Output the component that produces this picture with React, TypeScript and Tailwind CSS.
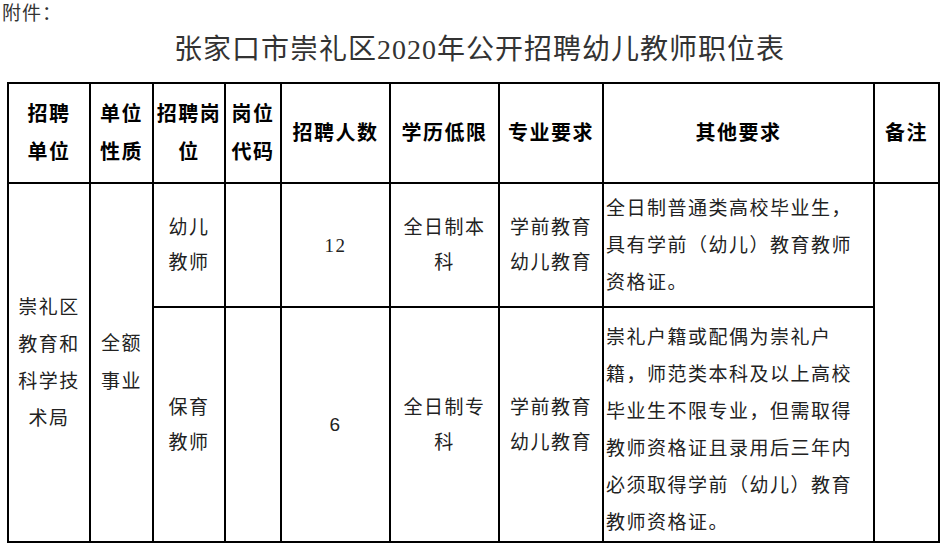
const cjk = "font-['Liberation_Serif','Noto_Sans_CJK_SC',serif]"

function Cell({ children, className = "" }: { children?: React.ReactNode; className?: string }) {
  return (
    <div className={"bg-white flex items-center justify-center text-center " + className}>
      {children}
    </div>
  )
}

function Head({ children, className = "" }: { children: React.ReactNode; className?: string }) {
  return (
    <Cell className={"font-bold text-[20px] leading-[38px] tracking-[1.5px] text-black " + className}>
      <div>{children}</div>
    </Cell>
  )
}

function Body({ children, className = "" }: { children?: React.ReactNode; className?: string }) {
  return (
    <Cell className={"text-[19px] leading-[35px] tracking-[1.5px] text-[#222] " + className}>
      <div>{children}</div>
    </Cell>
  )
}

export default function App() {
  return (
    <div className={"w-[940px] h-[544px] bg-white overflow-hidden " + cjk}>
      <div className="h-[28px] pl-[2px] text-[19px] leading-[28px] tracking-[1px] text-[#333]">附件：</div>
      <div className="h-[44px] pl-[19px] text-center text-[28px] leading-[44px] tracking-[1px] text-[#333]">
        张家口市崇礼区2020年公开招聘幼儿教师职位表
      </div>
      <div className="mt-[10px] ml-[7px] w-[933px] bg-black p-[2px] grid gap-[2px] grid-cols-[80px_61px_70px_54px_107px_107px_102px_269px_63px] grid-rows-[98px_122px_233px]">
        <Head>招聘<br />单位</Head>
        <Head>单位<br />性质</Head>
        <Head>招聘岗<br />位</Head>
        <Head>岗位<br />代码</Head>
        <Head>招聘人数</Head>
        <Head>学历低限</Head>
        <Head>专业要求</Head>
        <Head>其他要求</Head>
        <Head>备注</Head>

        <Body className="row-span-2 leading-[37px]">崇礼区<br />教育和<br />科学技<br />术局</Body>
        <Body className="row-span-2 leading-[38px]">全额<br />事业</Body>
        <Body>幼儿<br />教师</Body>
        <Body />
        <Body>12</Body>
        <Body>全日制本<br />科</Body>
        <Body>学前教育<br />幼儿教育</Body>
        <Cell className="justify-start text-left text-[19px] leading-[37px] tracking-[1.5px] text-[#222] pl-[2px]">
          <div className="whitespace-nowrap">
            全日制普通类高校毕业生，<br />具有学前（幼儿）教育教师<br />资格证。
          </div>
        </Cell>
        <Body className="row-span-2" />

        <Body>保育<br />教师</Body>
        <Body />
        <Body className="font-['Liberation_Sans',sans-serif]">6</Body>
        <Body>全日制专<br />科</Body>
        <Body>学前教育<br />幼儿教育</Body>
        <Cell className="justify-start text-left text-[19px] leading-[37px] tracking-[1.5px] text-[#222] pl-[2px] pt-[10px]">
          <div className="whitespace-nowrap">
            崇礼户籍或配偶为崇礼户<br />籍，师范类本科及以上高校<br />毕业生不限专业，但需取得<br />教师资格证且录用后三年内<br />必须取得学前（幼儿）教育<br />教师资格证。
          </div>
        </Cell>
      </div>
    </div>
  )
}
